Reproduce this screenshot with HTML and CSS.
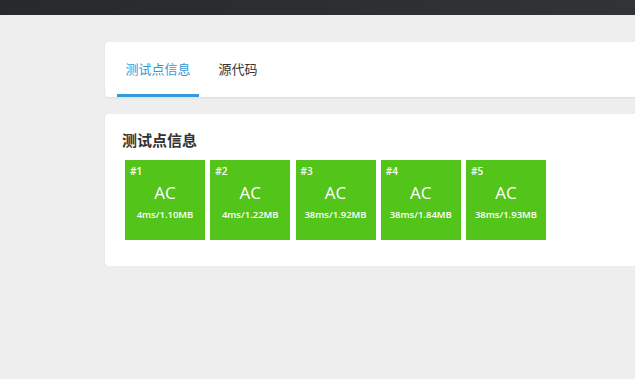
FILE: index.html
```html
<!DOCTYPE html>
<html lang="zh-CN">
<head>
  <meta charset="UTF-8">
  <title>测试点信息</title>
  <link rel="stylesheet" href="styles.css">
</head>
<body>
  <div class="topbar"></div>
  <div class="main">
    <div class="card tabs-card">
      <div class="tab active">测试点信息</div>
      <div class="tab">源代码</div>
    </div>
    <div class="card cases-card">
      <h3 class="card-title">测试点信息</h3>
      <div class="cases">
        <div class="case"><span class="case-id">#1</span><div class="case-status">AC</div><div class="case-info">4ms/1.10MB</div></div>
        <div class="case"><span class="case-id">#2</span><div class="case-status">AC</div><div class="case-info">4ms/1.22MB</div></div>
        <div class="case"><span class="case-id">#3</span><div class="case-status">AC</div><div class="case-info">38ms/1.92MB</div></div>
        <div class="case"><span class="case-id">#4</span><div class="case-status">AC</div><div class="case-info">38ms/1.84MB</div></div>
        <div class="case"><span class="case-id">#5</span><div class="case-status">AC</div><div class="case-info">38ms/1.93MB</div></div>
      </div>
    </div>
  </div>
</body>
</html>
```

FILE: styles.css
```css
body {
  margin: 0;
  font-family: "Open Sans", "Noto Sans CJK SC", sans-serif;
  background: #eeeeee;
  overflow: hidden;
}
.topbar {
  height: 15px;
  background: linear-gradient(to right, #28292b, #323336);
}
.main {
  margin: 27px 0 0 105px;
  width: 640px;
}
.card {
  background: white;
  border-radius: 4px;
  box-shadow: 0 1px 3px rgba(0, 0, 0, 0.08);
}
.tabs-card {
  display: flex;
  gap: 11px;
  height: 55px;
  padding: 0 12px;
  box-sizing: border-box;
}
.tab {
  display: flex;
  align-items: center;
  padding: 0 8.5px;
  font-size: 13px;
  color: #333;
  border-bottom: 3px solid transparent;
}
.tab.active {
  color: #3498db;
  border-bottom-color: #3498db;
}
.cases-card {
  margin-top: 17px;
  height: 152px;
  padding: 16px 17px 0;
  box-sizing: border-box;
}
.card-title {
  margin: 0;
  font-size: 15px;
  line-height: 21px;
  font-weight: bold;
  color: #333;
}
.cases {
  display: flex;
  gap: 5.25px;
  margin: 9px 0 0 3px;
}
.case {
  position: relative;
  width: 80px;
  height: 80px;
  background: #52c41a;
  color: white;
  text-align: center;
}
.case-id {
  position: absolute;
  left: 5px;
  top: 4px;
  font-size: 10px;
  font-weight: 600;
}
.case-status {
  padding-top: 21px;
  font-size: 17px;
  line-height: 23px;
}
.case-info {
  margin-top: 4px;
  font-size: 9.5px;
  font-weight: 600;
}
```
